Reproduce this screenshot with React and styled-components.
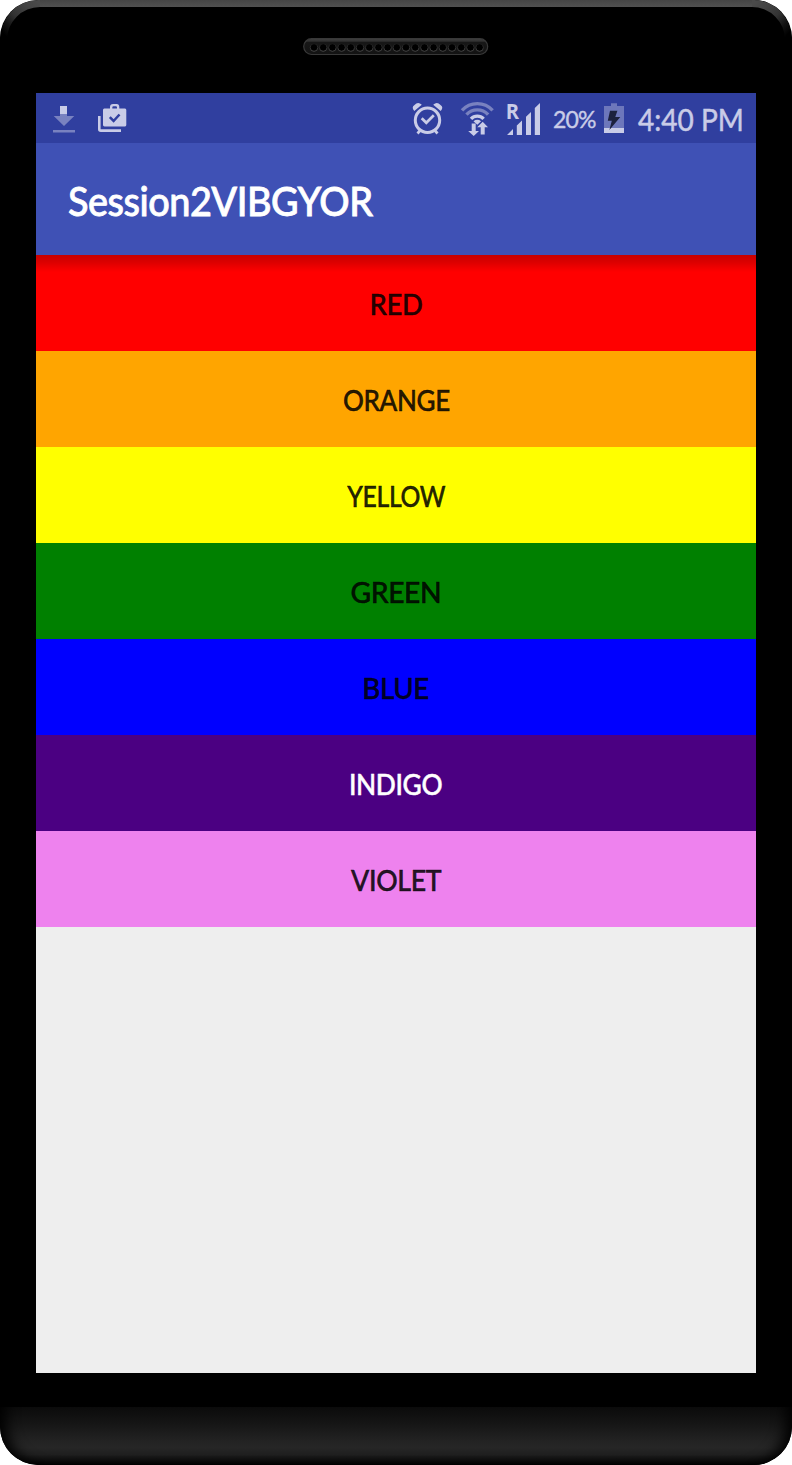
import React from "react";
import styled, { createGlobalStyle } from "styled-components";

const GlobalStyle = createGlobalStyle`
  html, body { margin: 0; background: #fff; }
  * { box-sizing: border-box; }
`;

const Phone = styled.main`
  position: relative;
  width: 792px;
  height: 1465px;
  display: flex;
  flex-direction: column;
  align-items: center;
  background: #000;
  border-radius: 38px;
  overflow: hidden;
  font-family: "Choco cooky", Lato, "Open Sans", sans-serif;
`;

const TopEdge = styled.svg`
  position: absolute;
  top: 0;
  left: 0;
`;

const Forehead = styled.header`
  height: 93px;
  flex: none;
  padding-top: 38px;
`;

const Screen = styled.section`
  width: 720px;
  height: 1280px;
  flex: none;
  display: flex;
  flex-direction: column;
  background: #eee;
`;

const Chin = styled.footer`
  width: 100%;
  height: 58px;
  margin-top: auto;
  border-radius: 0 0 38px 38px;
  background: linear-gradient(#0b0b0b 0%, #161616 30%, #242424 62%, #262626 70%, #1f1f1f 82%, #050505 98%, #000);
  box-shadow: inset 18px -5px 14px -12px #000, inset -18px -5px 14px -12px #000;
`;

const StatusBar = styled.div`
  height: 50px;
  flex: none;
  display: flex;
  align-items: center;
  justify-content: space-between;
  padding: 0 12px 0 16px;
  background: #303f9f;
  color: #c9cce7;
`;

const Group = styled.div`
  display: flex;
  align-items: center;
  gap: ${(p) => p.$gap}px;
`;

const Icon = styled.svg`
  display: block;
  flex: none;
  fill: #c9cce7;
`;

const Label = styled.span`
  display: inline-block;
  transform: scaleX(${(p) => p.$stretch || 1});
  transform-origin: ${(p) => p.$origin || "center"};
  -webkit-text-stroke: ${(p) => p.$stroke || 0.5}px currentColor;
  white-space: nowrap;
`;

const StatusText = styled.span`
  width: ${(p) => p.$width}px;
  flex: none;
  padding-top: ${(p) => p.$drop}px;
  font-size: ${(p) => p.$size}px;
  letter-spacing: ${(p) => p.$spacing}px;
  line-height: 40px;
  white-space: nowrap;
`;

const AppBar = styled.div`
  height: 112px;
  flex: none;
  display: flex;
  align-items: center;
  padding: 4px 32px 0;
  background: #3f51b5;
`;

const Title = styled.h1`
  margin: 0;
  color: #fff;
  font-size: 40px;
  font-weight: 500;
  letter-spacing: -0.5px;
  line-height: 48px;
`;

const ColorRow = styled.button`
  height: 96px;
  flex: none;
  display: flex;
  align-items: center;
  justify-content: center;
  padding: 1px 0 0;
  border: 0;
  font: 500 28px/34px "Choco cooky", Lato, "Open Sans", sans-serif;
  letter-spacing: -0.4px;
  color: ${(p) => p.$text || "rgba(0, 0, 0, 0.87)"};
  background: ${(p) =>
    p.$shaded
      ? `linear-gradient(rgba(0, 0, 0, 0.21), rgba(0, 0, 0, 0.14) 7px, transparent 17px), ${p.$color}`
      : p.$color};
`;

const rows = [
  { name: "RED", color: "#ff0000", stretch: 0.98 },
  { name: "ORANGE", color: "#ffa500", stretch: 0.93 },
  { name: "YELLOW", color: "#ffff00", stretch: 0.885 },
  { name: "GREEN", color: "#008000", stretch: 1.01 },
  { name: "BLUE", color: "#0000ff", stretch: 0.99 },
  { name: "INDIGO", color: "#4b0082", text: "#fff", stretch: 0.94 },
  { name: "VIOLET", color: "#ee82ee", stretch: 0.955 },
];

function Bezel() {
  return (
    <TopEdge width="792" height="60" viewBox="0 0 792 60">
      <defs>
        <linearGradient id="rim" x1="0" y1="0" x2="0" y2="7" gradientUnits="userSpaceOnUse">
          <stop offset="0" stopColor="#454545" />
          <stop offset="1" stopColor="#505050" />
        </linearGradient>
        <linearGradient id="fade" x1="4" y1="34" x2="38" y2="3" gradientUnits="userSpaceOnUse">
          <stop offset="0" stopColor="#000" />
          <stop offset=".2" stopColor="#131313" />
          <stop offset=".45" stopColor="#333" />
          <stop offset=".75" stopColor="#434343" />
          <stop offset="1" stopColor="#4a4a4a" />
        </linearGradient>
        <path id="corner" d="M0 40A38 40 0 0 1 38 0H40V7A33 33 0 0 0 7 40Z" fill="url(#fade)" />
      </defs>
      <path d="M40 0H752V7H40Z" fill="url(#rim)" />
      <use href="#corner" />
      <use href="#corner" transform="translate(792 0) scale(-1 1)" />
    </TopEdge>
  );
}

function Speaker() {
  return (
    <Icon width="186" height="18" viewBox="303 38 186 18">
      <defs>
        <linearGradient id="grille" x1="0" y1="0" x2="0" y2="1">
          <stop offset="0" stopColor="#414141" />
          <stop offset=".16" stopColor="#303030" />
          <stop offset=".23" stopColor="#171717" />
          <stop offset="1" stopColor="#131313" />
        </linearGradient>
        <linearGradient id="hole" x1="0" y1="0" x2="0" y2="1">
          <stop offset="0" stopColor="#1b1b1b" />
          <stop offset="1" stopColor="#4c4c4c" />
        </linearGradient>
      </defs>
      <rect x="303.7" y="38.7" width="184" height="15.8" rx="7.9" fill="url(#grille)" stroke="#383838" strokeWidth="1.2" />
      {Array.from({ length: 19 }, (_, i) => (
        <circle key={i} cx={314 + i * 9.2} cy="47.5" r="3.8" fill="#000" stroke="url(#hole)" strokeWidth=".9" />
      ))}
    </Icon>
  );
}

function DownloadIcon() {
  return (
    <Icon width="24" height="30" viewBox="52 103 24 30">
      <path d="M60 106h7v8h-7z" />
      <path d="M60 114h7v2h7.3L64 126 53.7 116H60zM53 130h22v2.6H53z" fill="#7982c0" />
    </Icon>
  );
}

function BriefcaseIcon() {
  return (
    <Icon width="30" height="30" viewBox="97 103 30 30">
      <path fillRule="evenodd" d="M104.3 108.5H110V107Q110 104 113 104H116.7Q119.3 104 119.3 107V108.5H125Q126.3 108.5 126.3 110V125Q126.3 126.4 125 126.4H104.5Q103 126.4 103 125V110Q103 108.5 104.3 108.5ZM112.3 108.5H117V107.5Q117 106.2 115.8 106.2H113.5Q112.3 106.2 112.3 107.5Z" />
      <path d="M99.3 116V129.2Q99.3 130.6 100.8 130.6H121" fill="none" stroke="#c9cce7" strokeWidth="2.6" />
      <path d="M109.8 117.2L113.6 121L119.5 114.5" fill="none" stroke="#303f9f" strokeWidth="2.5" />
    </Icon>
  );
}

function AlarmIcon() {
  return (
    <Icon width="32" height="34" viewBox="411 101 32 34">
      <circle cx="427.5" cy="120.2" r="12.2" fill="none" stroke="#c9cce7" strokeWidth="3" />
      <path d="M414.3 111Q411 107.5 414.5 105Q418 101 421.8 104.8ZM440.7 111Q444 107.5 440.5 105Q437 101 433.2 104.8Z" />
      <path d="M421.7 118.2L426.3 122.8L433.8 115.3M420.5 130L417.5 133.5M434.5 130L437.5 133.5" fill="none" stroke="#c9cce7" strokeWidth="2.7" />
    </Icon>
  );
}

function WifiIcon() {
  return (
    <Icon width="34" height="36" viewBox="460 100 34 36">
      <g fill="none" strokeWidth="3.4">
        <path d="M462 110.3A20.8 20.8 0 0 1 492.6 110.3M466.5 114.6A14.8 14.8 0 0 1 488.1 114.6" stroke="#7982c0" />
        <path d="M471 118.8A8.7 8.7 0 0 1 483.6 118.8" stroke="#c9cce7" />
      </g>
      <path d="M473.5 121.2Q477.3 118.5 481.1 121.2L477.3 124.8Z" />
      <path d="M471.7 123.5H475.7V131H479L473.7 136L468.2 131H471.7ZM480.7 134.5H484.7V127.3H488L482.7 121.7L477.2 127.3H480.7Z" />
    </Icon>
  );
}

const Roaming = styled.text`
  font: bold 21.5px "Open Sans", sans-serif;
`;

function SignalIcon() {
  return (
    <Icon width="38" height="48" viewBox="503 94 38 48">
      <Roaming x="505.8" y="118.7" textLength="13.3" lengthAdjust="spacingAndGlyphs">R</Roaming>
      <path d="M507 135L513 129V135ZM516.8 135V125.6L522 120.6V135ZM526 135V116.8L531 112V135ZM534.8 135V108L540 103V135Z" />
    </Icon>
  );
}

function BatteryIcon() {
  return (
    <Icon width="20" height="30" viewBox="604 103 20 30">
      <path d="M604 106H611V103.3H617V106H624V133H604Z" fill="#6d77bb" />
      <path d="M604 128H624V133H604Z" />
      <path d="M610 110.8H617.4L615.3 117H620.3L609.4 130L611.8 120.8H607.8Z" fill="#1c213e" />
    </Icon>
  );
}

export default function App() {
  return (
    <>
      <GlobalStyle />
      <Phone>
        <Bezel />
        <Forehead>
          <Speaker />
        </Forehead>
        <Screen>
          <StatusBar>
            <Group $gap={21}>
              <DownloadIcon />
              <BriefcaseIcon />
            </Group>
            <Group $gap={14}>
              <Group $gap={12}>
                <Group $gap={9}>
                  <Group $gap={17}>
                    <AlarmIcon />
                    <WifiIcon />
                  </Group>
                  <SignalIcon />
                </Group>
                <Group $gap={8}>
                  <StatusText $width={43} $size={23} $spacing={-0.8} $drop={1}>
                    <Label $origin="left" $stroke={0.4}>20%</Label>
                  </StatusText>
                  <BatteryIcon />
                </Group>
              </Group>
              <StatusText $width={106} $size={31.5} $spacing={0} $drop={1}>
                <Label $origin="left" $stretch={0.89}>4:40 PM</Label>
              </StatusText>
            </Group>
          </StatusBar>
          <AppBar>
            <Title>
              <Label $origin="left" $stretch={0.945} $stroke={0.8}>Session2VIBGYOR</Label>
            </Title>
          </AppBar>
          {rows.map((row, i) => (
            <ColorRow key={row.name} $color={row.color} $text={row.text} $shaded={i === 0}>
              <Label $stretch={row.stretch}>{row.name}</Label>
            </ColorRow>
          ))}
        </Screen>
        <Chin />
      </Phone>
    </>
  );
}
